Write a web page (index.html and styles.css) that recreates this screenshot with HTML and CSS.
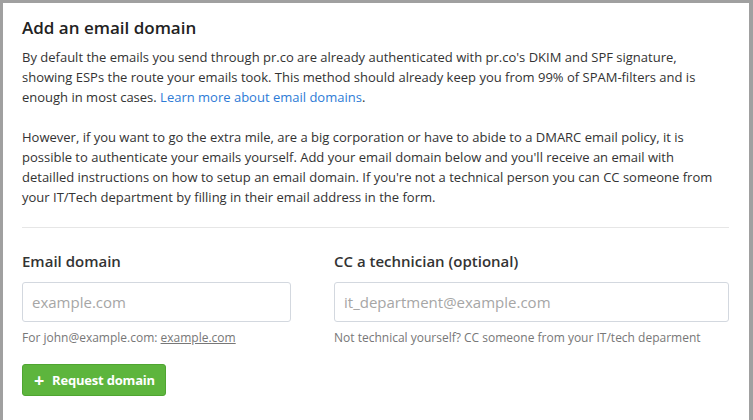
FILE: index.html
```html
<!DOCTYPE html>
<html>
<head>
<meta charset="utf-8">
<title>Add an email domain</title>
<link rel="stylesheet" href="styles.css">
</head>
<body>
<div class="panel">
    <h2 class="panelTitle">Add an email domain</h2>
    <p class="intro">By default the emails you send through pr.co are already authenticated with pr.co's DKIM and SPF signature, showing ESPs the route your emails took. This method should already keep you from 99% of SPAM-filters and is enough in most cases. <a href="#">Learn more about email domains</a>.</p>
    <p class="intro">However, if you want to go the extra mile, are a big corporation or have to abide to a DMARC email policy, it is possible to authenticate your emails yourself. Add your email domain below and you'll receive an email with detailled instructions on how to setup an email domain. If you're not a technical person you can CC someone from your IT/Tech department by filling in their email address in the form.</p>
    <hr class="divider">
    <form class="domainForm">
        <div class="fields">
            <div class="field">
                <label class="fieldLabel" for="domain">Email domain</label>
                <input class="textInput" type="text" id="domain" placeholder="example.com">
                <div class="hint">For john@example.com: <span class="hintSample">example.com</span></div>
            </div>
            <div class="field">
                <label class="fieldLabel" for="cc">CC a technician (optional)</label>
                <input class="textInput" type="text" id="cc" placeholder="it_department@example.com">
                <div class="hint">Not technical yourself? CC someone from your IT/tech deparment</div>
            </div>
        </div>
        <button class="submitButton" type="button"><span class="plus">+</span>Request domain</button>
    </form>
</div>
</body>
</html>
```

FILE: styles.css
```css
/* Panel for adding an email domain */
html, body
{
    margin:             0;
    height:             100%;
}

body
{
    background-color:   #a0a0a0;
    font-family:        "Open Sans", "Liberation Sans", sans-serif;
    color:              #333333;
}

.panel
{
    box-sizing:         border-box;
    height:             417px;
    margin:             3px 4px 0 3px;
    padding:            12px 20px 0 19px;
    background-color:   #ffffff;
}

.panelTitle
{
    margin:             0 0 6px 0;
    font-size:          17px;
    font-weight:        600;
    line-height:        26px;
    color:              #222222;
}

.intro
{
    margin:             0 0 20px 0;
    font-size:          13px;
    line-height:        20px;
}

.intro a
{
    color:              #2d7bd6;
    text-decoration:    none;
}

.divider
{
    margin:             4px 0 0 0;
    border:             0;
    border-top:         1px solid #e6e6e6;
}

.domainForm
{
    padding-top:        22px;
}

.fields
{
    display:            grid;
    grid-template-columns: 269px 1fr;
    column-gap:         43px;
}

.fieldLabel
{
    display:            block;
    font-size:          15px;
    font-weight:        600;
    line-height:        22px;
    margin-bottom:      10px;
    color:              #333333;
}

.textInput
{
    box-sizing:         border-box;
    width:              100%;
    height:             40px;
    padding:            0 9px;
    border:             1px solid #d3d8df;
    border-radius:      3px;
    font-family:        "Open Sans", "Liberation Sans", sans-serif;
    font-size:          15px;
    color:              #333333;
}

.textInput::placeholder
{
    color:              #a6a6a6;
}

.hint
{
    margin-top:         7px;
    font-size:          12px;
    line-height:        17px;
    color:              #777777;
}

.hintSample
{
    text-decoration:    underline;
}

.submitButton
{
    display:            flex;
    align-items:        center;
    margin-top:         18px;
    height:             32px;
    padding:            0 10px 0 11px;
    border:             1px solid #4fa531;
    border-radius:      3px;
    background-color:   #5db53d;
    color:              #ffffff;
    font-family:        "Open Sans", "Liberation Sans", sans-serif;
    font-size:          13px;
    font-weight:        700;
    letter-spacing:     -0.2px;
}

.plus
{
    font-size:          18px;
    font-weight:        700;
    margin-right:       8px;
    line-height:        1;
}
```
